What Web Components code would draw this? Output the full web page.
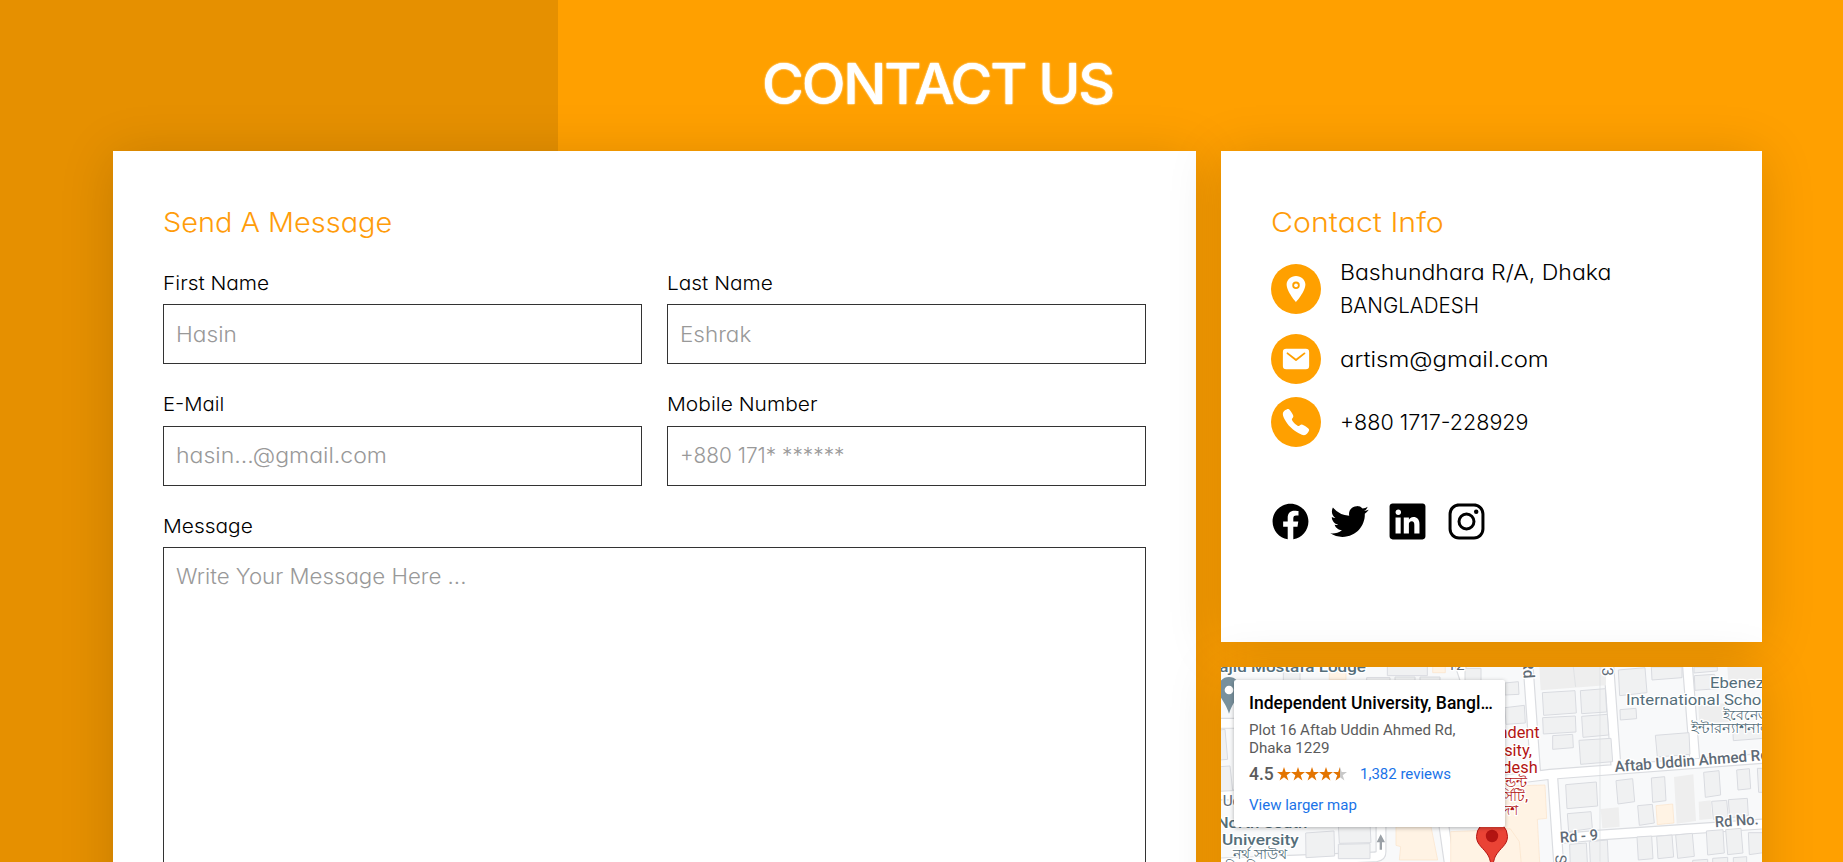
<!DOCTYPE html>
<html lang="en">
<head>
<meta charset="utf-8">
<title>Contact Us</title>
<style>
  html, body { margin: 0; height: 100%; overflow: hidden; }
  body { font-family: Inter, "Open Sans", sans-serif; font-weight: 300; font-feature-settings: "cv11"; background: #ffa000; }
</style>
</head>
<body>
<contact-page></contact-page>
<script>
const define = (name, html, setup) => {
  const tpl = document.createElement('template');
  tpl.innerHTML = html;
  customElements.define(name, class extends HTMLElement {
    constructor() {
      super();
      this.attachShadow({ mode: 'open' }).append(tpl.content.cloneNode(true));
    }
    connectedCallback() { if (setup) setup(this, this.shadowRoot); }
  });
};

/* A single line of text, stretched to a given advance width. */
define('text-run', `
  <style>:host{display:block;white-space:nowrap} span{display:inline-block;white-space:pre;transform-origin:0 50%;vertical-align:top}</style>
  <span><slot></slot></span>`, (host, root) => {
  const span = root.querySelector('span');
  const w = parseFloat(host.getAttribute('w'));
  host.style.width = w + 'px';
  span.style.transform = 'scaleX(' + (w / span.offsetWidth).toFixed(4) + ')';
});

define('form-field', `
  <style>
    :host{display:block}
    .label{font-size:19.3px;line-height:30px;color:#000;margin-bottom:6px}
    .box{box-sizing:border-box;height:60px;border:1px solid #333;padding:13px 12px;font-size:21.2px;line-height:32px;color:#999}
    :host([tall]) .box{height:420px;padding-top:12px}
    :host([raised]) .label{margin:-1px 0 7px}
    :host([raised]) .box{padding-top:12px}
  </style>
  <div class="label"><slot name="label"></slot></div>
  <div class="box"><slot></slot></div>`);

const icons = {
  location: '<path d="M256 32C167.67 32 96 96.51 96 176c0 128 160 304 160 304s160-176 160-304c0-79.49-71.67-144-160-144zm0 224a64 64 0 1164-64 64.07 64.07 0 01-64 64z"/><circle cx="256" cy="192" r="32"/>',
  mail: '<path d="M424 80H88a56.06 56.06 0 00-56 56v240a56.06 56.06 0 0056 56h336a56.06 56.06 0 0056-56V136a56.06 56.06 0 00-56-56zm-14.18 92.63l-144 112a16 16 0 01-19.64 0l-144-112a16 16 0 1119.64-25.26L256 251.73l134.18-104.36a16 16 0 0119.64 25.26z"/>',
  call: '<path d="M391 480c-19.52 0-46.94-7.06-88-30-49.93-28-88.55-53.85-138.21-103.38C116.91 298.77 93.61 267.79 61 208.45c-36.84-67-30.56-102.12-23.54-117.13C45.82 73.38 58.16 62.65 74.11 52a176.3 176.3 0 0128.64-15.2c1-.43 1.93-.84 2.76-1.21 4.95-2.23 12.45-5.6 21.95-2 6.34 2.38 12 7.25 20.86 16 18.17 17.92 43 57.83 52.16 77.43 6.15 13.21 10.22 21.93 10.23 31.71 0 11.45-5.76 20.28-12.75 29.81-1.31 1.79-2.61 3.5-3.87 5.16-7.61 10-9.28 12.89-8.18 18.05 2.23 10.37 18.86 41.24 46.19 68.51s57.31 42.85 67.72 45.07c5.38 1.15 8.33-.59 18.65-8.47 1.48-1.13 3-2.3 4.59-3.47 10.66-7.93 19.08-13.54 30.26-13.54h.06c9.73 0 18.06 4.22 31.86 11.18 18 9.08 59.11 33.59 77.14 51.78 8.77 8.84 13.66 14.48 16.05 20.81 3.6 9.53.21 17-2 22-.37.83-.78 1.74-1.21 2.75a176.49 176.49 0 01-15.29 28.58c-10.63 15.9-21.4 28.21-39.38 36.58A67.42 67.42 0 01391 480z"/>',
  facebook: '<path d="M480 257.35c0-123.7-100.3-224-224-224s-224 100.3-224 224c0 111.8 81.9 204.47 189 221.29V322.12h-56.89v-64.77H221V208c0-56.13 33.45-87.16 84.61-87.16 24.51 0 50.15 4.38 50.15 4.38v55.13H327.5c-27.81 0-36.51 17.26-36.51 35v42h62.12l-9.92 64.77H291v156.54c107.1-16.81 189-109.48 189-221.31z"/>',
  twitter: '<path d="M496 109.5a201.8 201.8 0 01-56.55 15.3 97.51 97.51 0 0043.33-53.6 197.74 197.74 0 01-62.56 23.5A99.14 99.14 0 00348.31 64c-54.42 0-98.46 43.4-98.46 96.9a93.21 93.21 0 002.54 22.1 280.7 280.7 0 01-203-101.3A95.69 95.69 0 0036 130.4c0 33.6 17.53 63.3 44 80.7A97.5 97.5 0 0135.22 199v1.2c0 47 34 86.1 79 95a100.76 100.76 0 01-25.94 3.4 94.38 94.38 0 01-18.51-1.8c12.51 38.5 48.92 66.5 92.05 67.3A199.59 199.59 0 0139.5 405.6a203 203 0 01-23.5-1.4A278.68 278.68 0 00166.74 448c181.36 0 280.44-147.7 280.44-275.8 0-4.2-.11-8.4-.31-12.5A198.48 198.48 0 00496 109.5z"/>',
  linkedin: '<path d="M444.17 32H70.28C49.85 32 32 46.7 32 66.89v374.72C32 461.91 49.85 480 70.28 480h373.78c20.54 0 35.94-18.21 35.94-38.39V66.89C480.12 46.7 464.6 32 444.17 32zm-273.3 373.43h-64.18V205.88h64.18zM141 175.54h-.46c-20.54 0-33.84-15.29-33.84-34.43 0-19.49 13.65-34.42 34.65-34.42s33.85 14.82 34.31 34.42c-.01 19.14-13.31 34.43-34.66 34.43zm264.43 229.89h-64.18V296.32c0-26.14-9.34-44-32.56-44-17.74 0-28.24 12-32.91 23.69-1.75 4.2-2.22 9.92-2.22 15.76v113.66h-64.18V205.88h64.18v27.77c9.34-13.3 23.93-32.44 57.88-32.44 42.13 0 74 27.77 74 87.64z"/>',
  instagram: '<path d="M349.33 69.33a93.62 93.62 0 0193.34 93.34v186.66a93.62 93.62 0 01-93.34 93.34H162.67a93.62 93.62 0 01-93.34-93.34V162.67a93.62 93.62 0 0193.34-93.34h186.66m0-37.33H162.67C90.8 32 32 90.8 32 162.67v186.66C32 421.2 90.8 480 162.67 480h186.66C421.2 480 480 421.2 480 349.33V162.67C480 90.8 421.2 32 349.33 32z"/><circle cx="377.33" cy="134.67" r="28"/><path d="M256 181.33A74.67 74.67 0 11181.33 256 74.75 74.75 0 01256 181.33m0-37.33a112 112 0 10112 112 112 112 0 00-112-112z"/>'
};
define('ui-icon', `
  <style>:host{display:block;width:var(--size,30px);height:var(--size,30px)} svg{display:block;width:100%;height:100%}</style>
  <svg viewBox="0 0 512 512" fill="currentColor"></svg>`, (host, root) => {
  root.querySelector('svg').innerHTML = icons[host.getAttribute('name')];
});

define('info-row', `
  <style>
    :host{display:flex;align-items:center;gap:18.500px;font-size:21.2px;line-height:33px;color:#000}
    .dot{flex:none;width:50px;height:50px;border-radius:50%;background:#ffa000;color:#fff;display:flex;align-items:center;justify-content:center}
  </style>
  <div class="dot"><slot name="icon"></slot></div>
  <div><slot></slot></div>`);

define('ui-card', `
  <style>:host{display:block;box-sizing:border-box;background:#fff;padding:50px;box-shadow:0 5px 50px rgba(0,0,0,.15)}
  .title{color:#ff9c0a;font-size:27.5px;line-height:40px;padding-top:1px;margin-bottom:-1px}</style>
  <div class="title"><slot name="title"></slot></div>
  <slot></slot>`);

define('place-card', `
  <style>
    :host{display:block;box-sizing:border-box;width:271px;height:147px;padding:12px 13px 0 15px;background:#fff;border-radius:2px;box-shadow:0 1px 4px rgba(0,0,0,.3);font-family:Roboto,sans-serif;font-weight:400;font-size:15px;color:#5b5b5b}
    .name{font-weight:500;font-size:17.5px;line-height:22px;color:#000}
    .addr{line-height:18px;margin-top:7px}
    .rate{display:flex;align-items:center;height:20px;margin-top:7px}
    .score{font-weight:500;font-size:17.5px;width:28px}
    svg{width:70px;height:14px;margin-right:13px}
    .link{color:#1a73e8}
    .more{line-height:20px;margin-top:11px}
  </style>
  <div class="name"><text-run w="244">Independent University, Bangl…</text-run></div>
  <div class="addr"><text-run w="206">Plot 16 Aftab Uddin Ahmed Rd,</text-run><text-run w="80">Dhaka 1229</text-run></div>
  <div class="rate"><span class="score"><text-run w="25">4.5</text-run></span>
    <svg viewBox="0 0 70 14"><defs><path id="s" d="M7 0 8.7 5.1H14L9.7 8.3 11.4 13.5 7 10.3 2.6 13.5 4.3 8.3 0 5.1H5.3z"/></defs>
    <g fill="#e37400"><use href="#s"/><use href="#s" x="14"/><use href="#s" x="28"/><use href="#s" x="42"/></g>
    <use href="#s" x="56" fill="#c8c8c8"/><path fill="#e37400" d="M63 0v10.3L58.6 13.5 60.3 8.3 56 5.1h5.3z"/></svg>
    <span class="link"><text-run w="91">1,382 reviews</text-run></span></div>
  <div class="more link"><text-run w="108">View larger map</text-run></div>`);

define('map-view', `
  <style>
    :host{display:block;position:relative;overflow:hidden;background:#f8f9fa;height:245px;box-shadow:0 5px 50px rgba(0,0,0,.15)}
    .map{display:block;width:541px;height:245px}
    place-card{position:absolute;left:13px;top:13px}
    .pin{position:absolute;left:255px;top:153px}
    text{font-family:Roboto,"Noto Sans",sans-serif;font-size:46px;font-weight:500;fill:#5f6b76;paint-order:stroke;stroke:#fff;stroke-width:8px;stroke-linejoin:round}
    .place{fill:#546e7a}.red{fill:#b31412;font-weight:400}.thin{font-weight:400}.bn{font-weight:400;font-size:43px}
    .b{fill:#f0f1f2;stroke:#d9dbe0;stroke-width:3}
    .road{fill:none;stroke:#fff;stroke-width:26}
    .edge{fill:none;stroke:#dadce0;stroke-width:33}
    .p{fill:#fff3e4;stroke:#fbe3c8;stroke-width:2}
  </style>
  <svg class="map" viewBox="0 0 541 245">
    <g transform="translate(-11 -12) scale(.33333)">
      <path class="edge" d="M0 205H80M0 420H80M513 500V590Q513 605 490 606L0 625M700 500 720 640M740 0 770 90"/>
      <path class="road" d="M0 205H80M0 420H80M513 500V590Q513 605 490 606L0 625M700 500 720 640M740 0 770 90"/>
      <path class="b" d="M220 30h50v60h-50zM532 20h120v42h-120zM765 40h48v60h-48zM470 68h70v30h-70zM555 66h60v30h-60zM630 66h60v30h-60zM30 225l15-2 8 90-25 2zM30 335l30-2 8 74-40 2zM287 534l85-6 2 75-86 5zM385 510l95-5 3 58-95 2zM385 568l95-2v45h-95z"/>
      <path class="p" d="M358 50h50v24h-50zM668 25h38v28h-38zM558 515h105l20 100H568l4-40-14-4zM722 530l240-10v120H722z"/>
      <g fill="#78909c"><path d="M57 66a33 33 0 0 0-33 35c0 25 22 38 33 75 11-37 33-50 33-75a33 33 0 0 0-33-35z"/><circle cx="57" cy="105" r="13" fill="#fff"/><path d="M512 538l-12 24h9v22h7v-22h9z" fill="#9aa0a6"/></g>
      <text class="place" x="28" y="51" textLength="440" lengthAdjust="spacingAndGlyphs">ajid Mostafa Lodge</text>
      <text x="712" y="44" class="thin">12</text>
      <text x="38" y="454" class="thin">Ud</text>
      <text class="place" x="20" y="519" textLength="272" lengthAdjust="spacingAndGlyphs">North South</text>
      <text class="place" x="36" y="571" textLength="230" lengthAdjust="spacingAndGlyphs">University</text>
      <text class="place bn" x="70" y="613" textLength="162" lengthAdjust="spacingAndGlyphs">নর্থ সাউথ</text>
      <text class="place bn" x="44" y="652" textLength="206" lengthAdjust="spacingAndGlyphs">বিশ্ববিদ্যালয়</text>
    </g>
    <g transform="translate(269 -12) scale(.33333)">
      <path class="p" d="M0 395 165 390 170 490 142 493 150 640H95L88 560 60 520 0 525z"/>
      <path class="edge" d="M0 380 180 358 850 308M112 0 137 355M354 0 378 335M590 0 614 310M187 350 207 640M220 550 330 540 850 505"/>
      <path class="road" d="M0 380 180 358 850 308M112 0 137 355M354 0 378 335M590 0 614 310M187 350 207 640M220 550 330 540 850 505"/>
      <path class="b" d="M45 84l40-4 2 38-42 2zM45 158l58-7 3 53-58 4zM157 113l98-6 4 67-98 7zM271 107l75-6 4 70-75 5zM158 188l98-5 2 48-98 6zM275 184l77-6 4 62-77 7zM188 242l60-4 2 40-62 5zM267 256l96-6 5 70-96 8zM385 45l80-7 6 75-82 9zM484 36h92v32l-90 7zM390 164l48-4 2 31-49 4zM496 241l101-8 3 65-98 8zM612 36h70v12l-70 6zM613 62l60-4 22 42-80 6zM728 215h92v35l-90 7zM227 389l92-8 4 72-92 8zM378 377l50-6 6 69-50 7zM484 369l40-4 4 72-40 5zM641 352l46-5 5 73-46 7zM740 345l38-4 4 60-38 4zM802 340h20v72h-16zM232 476l71-6 4 50-71 10zM443 452l44-4 6 56-45 7zM665 439l45-3 5 53-45 4zM715 434l57-4 3 52-56 6zM239 568l50-4 4 76h-52zM298 560l54-5 4 90h-54zM441 546l44-3 4 68-44 4zM500 544l46-4 5 66-47 5zM557 540l50-5 6 69-50 6zM649 528l50-4 4 70-50 6zM707 524l46-4 6 74-46 5zM775 533h45v60l-42 6zM608 616l45-3v25h-45zM668 610l45-3v25h-45zM730 608l40-3v25h-40z"/>
      <path fill="#eee" d="M148 36h200v55l-196 15zM552 366l58-8 8 140-58 8zM332 462l54-5 3 58-52 5zM626 440l36-4 4 55-38 4zM712 36h108v60H716zM625 150l80-5 15 55-92 8z"/>
      <path d="M250 36l7 60M330 36V620" stroke="#dadce0" stroke-width="2" fill="none"/>
      <path class="p" d="M498 452l50-5 4 57-50 5z"/>
      <text transform="translate(98 16) rotate(87)">Rd</text>
      <text transform="translate(336 38) rotate(87)" class="thin">3</text>
      <text transform="translate(196 600) rotate(87)" class="thin">S</text>
      <text class="place thin" x="660" y="98" textLength="188" lengthAdjust="spacingAndGlyphs">Ebeneze</text>
      <text class="place thin" x="408" y="150" textLength="435" lengthAdjust="spacingAndGlyphs">International Schoo</text>
      <text class="place bn" x="700" y="194">ইবেনেজার</text>
      <text class="place bn" x="602" y="234" textLength="240" lengthAdjust="spacingAndGlyphs">ইন্টারন্যাশনাল</text>
      <text transform="translate(375 351) rotate(-4.5)" textLength="464" lengthAdjust="spacingAndGlyphs">Aftab Uddin Ahmed Rd</text>
      <text transform="translate(676 517) rotate(-4)" textLength="131" lengthAdjust="spacingAndGlyphs">Rd No.</text>
      <text transform="translate(211 563) rotate(-4)" textLength="114" lengthAdjust="spacingAndGlyphs">Rd - 9</text>
      <text class="red" x="149" y="249" text-anchor="end" style="font-size:49px">Independent</text>
      <text class="red" x="126" y="302" text-anchor="end" style="font-size:49px">University,</text>
      <text class="red" x="143" y="354" text-anchor="end" style="font-size:49px">Bangladesh</text>
      <text class="red bn" x="112" y="397" text-anchor="end">ইন্ডিপেন্ডেন্ট</text>
      <text class="red bn" x="114" y="438" text-anchor="end">ইউনিভার্সিটি,</text>
      <text class="red bn" x="84" y="479" text-anchor="end">বাংলাদেশ</text>
    </g>
  </svg>
  <svg class="pin" width="32" height="48" viewBox="0 0 32 48"><path d="M16 1A15.5 15.5 0 0 0 .5 16.5C.5 25 8 28 12.5 36 14 39 14.500 44 16 44S18 39 19.5 36C24 28 31.5 25 31.5 16.5A15.5 15.5 0 0 0 16 1z" fill="#ea4335" stroke="#b31412"/><circle cx="16" cy="16" r="6.2" fill="#b31412"/></svg>
  <place-card></place-card>`);

define('contact-page', `
  <style>
    :host{display:block;box-sizing:border-box;width:100%;height:862px;overflow:hidden;padding:0 81px 0 113px;background:linear-gradient(90deg,#e69000 558px,#ffa000 558px)}
    header{height:151px;display:flex;justify-content:center;box-sizing:border-box;padding-top:49px;color:#fff;font-size:56px;line-height:70px;font-weight:500;letter-spacing:-2.2px;text-shadow:0 0 1px #fff,0 0 2px #fff}
    main{display:grid;grid-template-columns:1083px 541px;grid-template-rows:491px 245px;gap:25px}
    .form{grid-row:span 2;height:860px}
    .fields{display:grid;grid-template-columns:479px 479px;column-gap:25px;row-gap:26px;margin-top:27px}
    .wide{grid-column:span 2;margin-top:-1px}
    .rows{margin-top:15px;display:grid;gap:12px}
    .last{margin-top:1px}
    .social{display:flex;gap:17.7px;margin:54px 0 0 -1.2px;--size:41px;color:#000}
  </style>
  <header><text-run w="351">CONTACT US</text-run></header>
  <main>
    <ui-card class="form"><text-run slot="title" w="229">Send A Message</text-run>
      <div class="fields">
        <form-field><text-run slot="label" w="106">First Name</text-run><text-run w="61">Hasin</text-run></form-field>
        <form-field><text-run slot="label" w="106">Last Name</text-run><text-run w="71">Eshrak</text-run></form-field>
        <form-field raised><text-run slot="label" w="61">E-Mail</text-run><text-run w="211">hasin...@gmail.com</text-run></form-field>
        <form-field raised><text-run slot="label" w="151">Mobile Number</text-run><text-run w="165">+880 171* ******</text-run></form-field>
        <form-field class="wide" tall><text-run slot="label" w="90">Message</text-run><text-run w="290">Write Your Message Here ...</text-run></form-field>
      </div>
    </ui-card>
    <ui-card><text-run slot="title" w="173">Contact Info</text-run>
      <div class="rows">
        <info-row><ui-icon slot="icon" name="location"></ui-icon><text-run w="271">Bashundhara R/A, Dhaka</text-run><text-run w="139">BANGLADESH</text-run></info-row>
        <info-row><ui-icon slot="icon" name="mail"></ui-icon><text-run w="209">artism@gmail.com</text-run></info-row>
        <info-row class="last"><ui-icon slot="icon" name="call"></ui-icon><text-run w="189">+880 1717-228929</text-run></info-row>
      </div>
      <div class="social"><ui-icon name="facebook"></ui-icon><ui-icon name="twitter"></ui-icon><ui-icon name="linkedin"></ui-icon><ui-icon name="instagram"></ui-icon></div>
    </ui-card>
    <map-view></map-view>
  </main>`);
</script>
</body>
</html>
